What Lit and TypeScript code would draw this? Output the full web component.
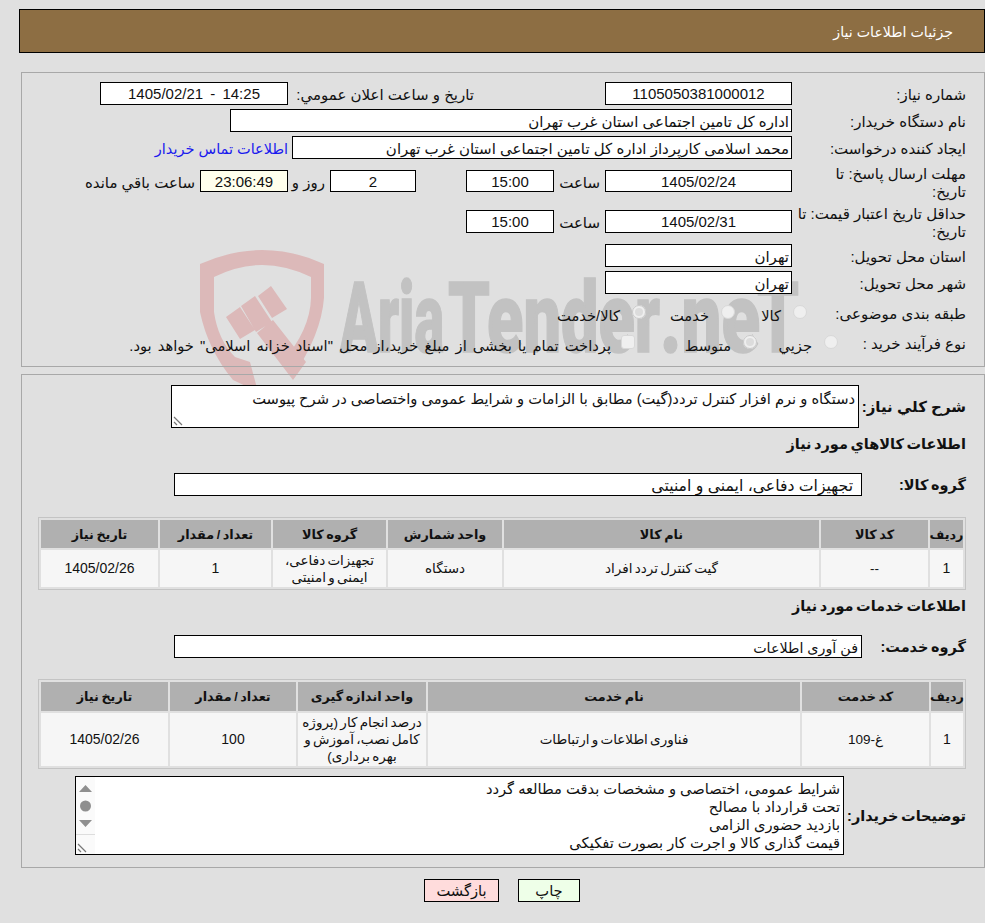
import { LitElement, html, css, svg } from "lit";
import { customElement } from "lit/decorators.js";

const goods = ["1", "--", "گیت کنترل تردد افراد", "دستگاه", "تجهیزات دفاعی، ایمنی و امنیتی", "1", "1405/02/26"];
const goodsHead = ["ردیف", "کد کالا", "نام کالا", "واحد شمارش", "گروه کالا", "تعداد / مقدار", "تاریخ نیاز"];
const services = ["1", "غ-109", "فناوری اطلاعات و ارتباطات", "درصد انجام کار (پروژه کامل نصب، آموزش و بهره برداری)", "100", "1405/02/26"];
const servicesHead = ["ردیف", "کد خدمت", "نام خدمت", "واحد اندازه گیری", "تعداد / مقدار", "تاریخ نیاز"];

const buyerNotes = [
  "شرایط عمومی، اختصاصی و مشخصات بدقت مطالعه گردد",
  "تحت قرارداد با مصالح",
  "بازدید حضوری الزامی",
  "قیمت گذاری کالا و اجرت کار بصورت تفکیکی",
];

// watermark is drawn in page coordinates, the viewBox starts where the svg is placed
const watermark = svg`
  <svg class="mark" viewBox="190 240 620 165" width="620" height="165">
    <path fill="#dcb9b9" d="M200 264 Q232 250 262 250 Q294 250 324 264 L324 298 Q321 335 293 376 L283 361 Q310 330 311 298 L311 277 Q286 265 262 265 Q238 265 214 277 L214 312 Q218 340 235 357 L250 362 L258 392 L233 380 Q208 350 200 312 Z"/>
    <path fill="#dcb9b9" d="M226 317 L240 307 L255 330 L240 339 Z M241 306 L255 296 L272 322 L256 332 Z M258 296 L271 286 L287 309 L272 318 Z M257 333 L273 320 L306 362 L293 380 Z"/>
    <g font-family="Roboto" font-weight="900" font-size="98" fill="#c2c2c2" stroke="#c2c2c2" stroke-width="1.5" lengthAdjust="spacingAndGlyphs">
      <text x="340" y="352" textLength="104" lengthAdjust="spacingAndGlyphs">Aria</text>
      <text x="448" y="352" textLength="212" lengthAdjust="spacingAndGlyphs">Tender</text>
      <text x="660" y="352" textLength="100" lengthAdjust="spacingAndGlyphs">.ne</text>
      <text x="757" y="352" textLength="42" lengthAdjust="spacingAndGlyphs">T</text>
    </g>
  </svg>`;

const resizer = svg`
  <svg class="grip" viewBox="0 0 10 10" width="10" height="10">
    <path d="M1 1 L9 9 M1 6 L4 9" stroke="#777" stroke-width="1.2" fill="none"/>
  </svg>`;

const scrollArrows = svg`
  <svg class="arrows" viewBox="0 0 19 45" width="19" height="45">
    <path d="M3 7 L9.5 0 L16 7 Z M3 35 L16 35 L9.5 42 Z" fill="#8f8f8f"/>
    <circle cx="9.5" cy="21" r="5.5" fill="#8f8f8f"/>
  </svg>`;

@customElement("app-root")
export class AppRoot extends LitElement {
  static styles = css`
    :host {
      display: block;
      position: relative;
      height: 923px;
      overflow: hidden;
      background: #e0e0e0;
      direction: rtl;
      font-family: "Liberation Sans", "DejaVu Sans", sans-serif;
      font-size: 14.7px;
      color: #111;
    }
    .mark { position: absolute; left: 190px; top: 240px; direction: ltr; }
    .page { position: relative; display: flex; flex-direction: column; padding-top: 9px; }
    .title {
      margin-left: 19px;
      height: 44px;
      box-sizing: border-box;
      border: 1px solid #000;
      background: #8d6e43;
      color: #fff;
      display: flex;
      align-items: center;
      padding: 2px 31px 0 0;
      font-size: 14.2px;
    }
    .panel { margin: 19px 0 0 21px; border: 1px solid #a8a8a8; box-sizing: border-box; }
    .one { height: 295px; padding-top: 9px; font-size: 15px; }
    .two { margin-top: 7px; height: 494px; padding-top: 10px; }

    .row { display: flex; align-items: center; height: 23px; margin-top: 4px; }
    .row.first { margin-top: 0; }
    .row.gap11 { margin-top: 11px; height: 22px; }
    .row.gap18 { margin-top: 18px; }
    .row.gap11b { margin-top: 11px; }
    .row.option { height: 20px; margin-top: 8px; }
    .row.option2 { height: 20px; margin-top: 10px; }
    .lab { width: 192px; flex: none; padding: 3px 18px 0 0; box-sizing: border-box; }
    .lab.wrap { line-height: 18px; white-space: nowrap; }
    .lab.s150 { width: 150px; }
    .lab.s146 { width: 146px; }

    .box {
      background: #fff;
      border: 1px solid #000;
      height: 100%;
      box-sizing: border-box;
      display: flex;
      align-items: center;
      justify-content: center;
      flex: none;
      white-space: nowrap;
    }
    .end { justify-content: flex-start; padding: 2px 2px 0 0; }
    .w187 { width: 187px; }
    .w188 { width: 188px; }
    .w562 { width: 562px; }
    .w500 { width: 500px; }
    .w88 { width: 88px; }
    .w86 { width: 86px; }
    .soft { background: #ffffec; }
    .stamp { word-spacing: 3px; }
    .m131 { margin-right: 131px; width: 186px; flex: none; white-space: nowrap; padding-top: 3px; }
    .link { color: #1a1aee; margin-right: 4px; font-size: 14.5px; padding-top: 2px; }
    .unit { width: 51px; padding: 3px 0 0 0; padding-right: 5px; box-sizing: border-box; flex: none; }
    .day-gap { margin-right: 50px; }
    .unit2 { width: 42px; padding: 3px 5px 0 0; box-sizing: border-box; flex: none; }
    .unit3 { padding: 3px 5px 0 0; }

    .opt { display: flex; align-items: center; gap: 12px; flex: none; white-space: nowrap; font-size: 14.7px; }
    .txt { padding-top: 6px; }
    .o72 { width: 72px; }
    .o89 { width: 89px; }
    .o81 { width: 81px; }
    .o122 { width: 122px; }
    .start27 { margin-right: 27px; }
    .radio {
      width: 14px;
      height: 14px;
      box-sizing: border-box;
      border: 1px solid #d8d8d8;
      border-radius: 50%;
      background: #efefef;
      flex: none;
    }
    .radio.on { border: 3px solid #efefef; background: #dcdcdc; outline: 1px solid #c8c8c8; outline-offset: -1px; }
    .check { width: 14px; height: 14px; box-sizing: border-box; border: 1px solid #d8d8d8; border-radius: 3px; background: #efefef; flex: none; }
    .gap10 { gap: 10px; word-spacing: 2px; }

    .bold { font-weight: 700; font-size: 14.5px; word-spacing: -1.5px; white-space: nowrap; }
    .bold.large { font-size: 15px; word-spacing: 0; }
    .row2 { display: flex; align-items: center; }
    .l125 { width: 125px; padding-right: 18px; box-sizing: border-box; flex: none; }
    .l122 { width: 122px; padding-right: 18px; box-sizing: border-box; flex: none; }
    .l140 { width: 140px; padding-right: 18px; box-sizing: border-box; flex: none; }
    .area {
      background: #fff;
      border: 1px solid #000;
      box-sizing: border-box;
      position: relative;
      flex: none;
    }
    .small-area { width: 688px; height: 43px; padding: 4px 3px 0 0; line-height: 18px; }
    .grip { position: absolute; left: 1px; bottom: 1px; display: block; }
    .head { height: 18px; line-height: 18px; padding-right: 18px; }
    .h1 { margin-top: 7px; }
    .h2 { margin-top: 7px; }
    .group { height: 23px; margin-top: 20px; }
    .group2 { height: 23px; margin-top: 20px; }
    .group-box { width: 688px; height: 23px; }
    .goods-name { padding-right: 8px; font-size: 15.7px; }
    .service-name { padding-right: 3px; font-size: 14.3px; }

    .table {
      display: grid;
      gap: 2px;
      margin: 21px 18px 0 16px;
      padding: 2px;
      border: 1px solid #c4c4c4;
      font-size: 13.5px;
      text-align: center;
    }
    .t-goods { grid-template-columns: 33px 107px 315px 114px 113px 111px 117px; grid-template-rows: 28px 37px; }
    .t-services { grid-template-columns: 32px 127px 372px 128px 126px 127px; grid-template-rows: 29px 53px; }
    .th, .td { display: flex; align-items: center; justify-content: center; line-height: 17px; }
    .th { background: #b0b0b0; font-weight: 700; font-size: 12.8px; word-spacing: -1px; }
    .td { background: #f6f6f6; word-spacing: -1.5px; }
    .num { font-size: 14px; }

    .notes-row { margin-top: 7px; }
    .notes { width: 769px; height: 79px; display: flex; }
    .lines { flex: 1; padding: 3px 3px 0 0; line-height: 18px; white-space: nowrap; }
    .bar { width: 19px; flex: none; background: #fafafa; display: flex; flex-direction: column; }
    .arrows { display: block; margin-top: 8px; }
    .bar-foot { margin-top: auto; height: 19px; border-top: 1px solid #ddd; }

    .actions { display: flex; justify-content: center; gap: 19px; margin: 11px 0 0 19px; }
    .btn {
      height: 23px;
      box-sizing: border-box;
      border: 1px solid #000;
      display: flex;
      align-items: center;
      justify-content: center;
      font-family: inherit;
      font-size: 14.7px;
      color: #111;
      padding: 0;
    }
    .print { width: 62px; background: #eeffe8; }
    .back { width: 75px; background: #ffdcdc; }
  `;

  private table(kind: string, head: string[], cells: string[]) {
    return html`<div class="table ${kind}">
      ${head.map((h) => html`<div class="th">${h}</div>`)}
      ${cells.map((c) => html`<div class="td ${/^[\d/]+$/.test(c) ? "num" : ""}">${c}</div>`)}
    </div>`;
  }

  render() {
    return html`
      ${watermark}
      <div class="page">
        <div class="title">جزئیات اطلاعات نیاز</div>

        <div class="panel one">
          <div class="row first">
            <span class="lab">شماره نیاز:</span>
            <div class="box w187">1105050381000012</div>
            <span class="m131">تاریخ و ساعت اعلان عمومي:</span>
            <div class="box w188 stamp">14:25 - 1405/02/21</div>
          </div>
          <div class="row">
            <span class="lab">نام دستگاه خریدار:</span>
            <div class="box w562 end">اداره کل تامین اجتماعی استان غرب تهران</div>
          </div>
          <div class="row">
            <span class="lab">ایجاد کننده درخواست:</span>
            <div class="box w500 end">محمد اسلامی کارپرداز اداره کل تامین اجتماعی استان غرب تهران</div>
            <span class="link">اطلاعات تماس خریدار</span>
          </div>
          <div class="row gap11">
            <span class="lab wrap">مهلت ارسال پاسخ: تا<br />تاریخ:</span>
            <div class="box w187">1405/02/24</div>
            <span class="unit">ساعت</span>
            <div class="box w88">15:00</div>
            <div class="box w86 day-gap">2</div>
            <span class="unit2">روز و</span>
            <div class="box w88 soft">23:06:49</div>
            <span class="unit3">ساعت باقي مانده</span>
          </div>
          <div class="row gap18">
            <span class="lab wrap">حداقل تاریخ اعتبار قیمت: تا<br />تاریخ:</span>
            <div class="box w187">1405/02/31</div>
            <span class="unit">ساعت</span>
            <div class="box w88">15:00</div>
          </div>
          <div class="row gap11b">
            <span class="lab">استان محل تحویل:</span>
            <div class="box w187 end">تهران</div>
          </div>
          <div class="row">
            <span class="lab">شهر محل تحویل:</span>
            <div class="box w187 end">تهران</div>
          </div>
          <div class="row option">
            <span class="lab s150">طبقه بندی موضوعی:</span>
            <label class="opt o72 start27"><span class="radio"></span><span class="txt">کالا</span></label>
            <label class="opt o89"><span class="radio"></span><span class="txt">خدمت</span></label>
            <label class="opt"><span class="radio on"></span><span class="txt">کالا/خدمت</span></label>
          </div>
          <div class="row option2">
            <span class="lab s146">نوع فرآیند خرید :</span>
            <label class="opt o81"><span class="radio"></span><span class="txt">جزيي</span></label>
            <label class="opt o122"><span class="radio on"></span><span class="txt">متوسط</span></label>
            <label class="opt gap10"><span class="check"></span><span class="txt">پرداخت تمام یا بخشی از مبلغ خرید،از محل "اسناد خزانه اسلامی" خواهد بود.</span></label>
          </div>
        </div>

        <div class="panel two">
          <div class="row2">
            <span class="l125 bold large">شرح كلي نياز:</span>
            <div class="area small-area">
              دستگاه و نرم افزار کنترل تردد(گیت) مطابق با الزامات و شرایط عمومی واختصاصی در شرح پیوست
              ${resizer}
            </div>
          </div>
          <div class="head h1 bold">اطلاعات کالاهاي مورد نياز</div>
          <div class="row2 group">
            <span class="l122 bold">گروه کالا:</span>
            <div class="box group-box end goods-name">تجهیزات دفاعی، ایمنی و امنیتی</div>
          </div>
          ${this.table("t-goods", goodsHead, goods)}
          <div class="head h2 bold">اطلاعات خدمات مورد نياز</div>
          <div class="row2 group2">
            <span class="l122 bold">گروه خدمت:</span>
            <div class="box group-box end service-name">فن آوری اطلاعات</div>
          </div>
          ${this.table("t-services", servicesHead, services)}
          <div class="row2 notes-row">
            <span class="l140 bold">توضیحات خریدار:</span>
            <div class="area notes">
              <div class="lines">${buyerNotes.map((l) => html`<div>${l}</div>`)}</div>
              <div class="bar">${scrollArrows}<div class="bar-foot"></div></div>
              ${resizer}
            </div>
          </div>
        </div>

        <div class="actions">
          <button class="btn print">چاپ</button>
          <button class="btn back">بازگشت</button>
        </div>
      </div>
    `;
  }
}
